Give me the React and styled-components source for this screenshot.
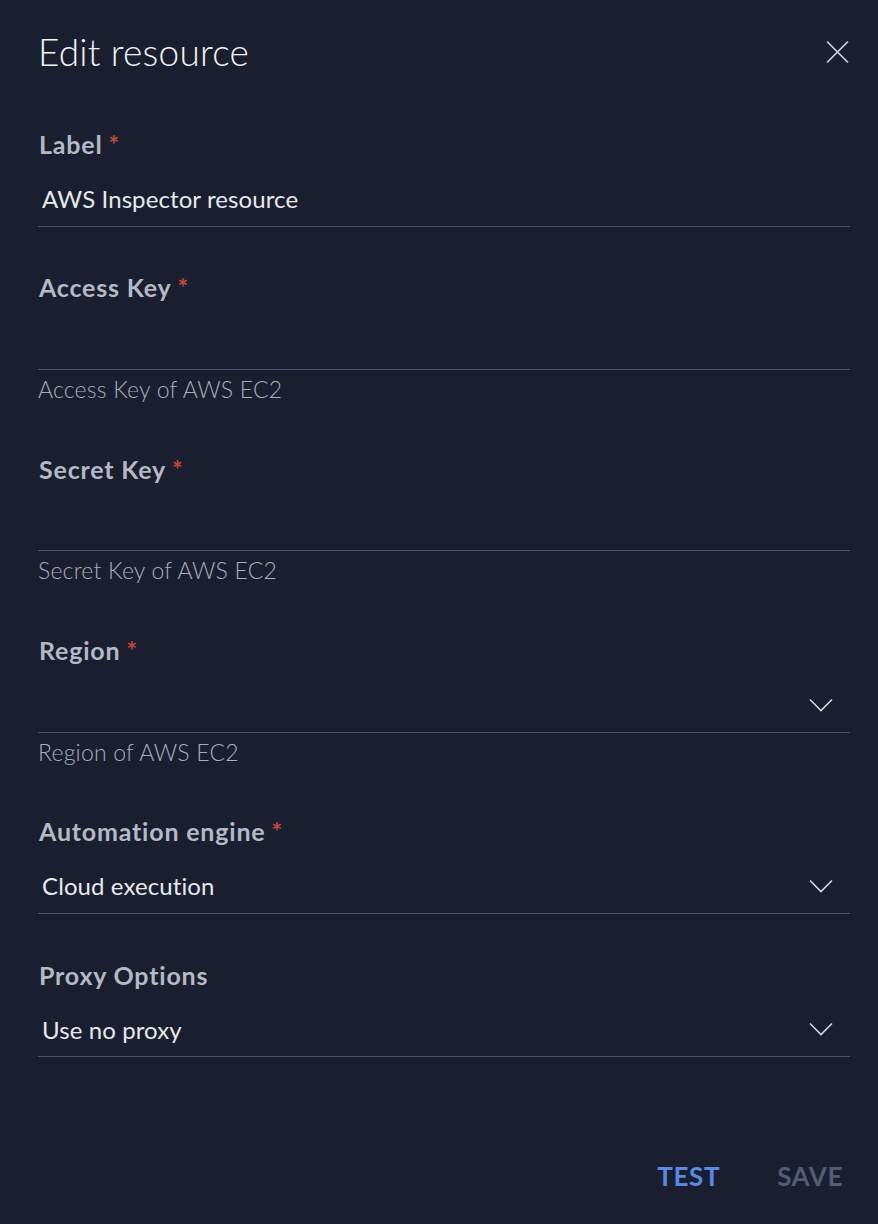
import { createGlobalStyle } from 'styled-components'
import styled from 'styled-components'

const GlobalStyle = createGlobalStyle`
	html, body {
		margin: 0;
		padding: 0;
		background: #1a1f30;
	}
	body {
		font-family: Lato, "Noto Sans", sans-serif;
		color: #e8eaee;
	}
`

const Panel = styled.div`
	width: 878px;
	height: 1224px;
	box-sizing: border-box;
	padding: 24px 28px 0 38px;
	display: flex;
	flex-direction: column;
	background: #1a1f30;
`

const Header = styled.div`
	display: flex;
	justify-content: space-between;
	align-items: center;
	margin-bottom: 49px;
`

const Title = styled.h1`
	margin: 0;
	font-size: 37px;
	font-weight: 300;
	letter-spacing: 0.2px;
	line-height: 56px;
	color: #f2f3f5;
`

const CloseButton = styled.button`
	background: none;
	border: none;
	padding: 0;
	width: 24px;
	height: 24px;
	display: flex;
	align-items: center;
	justify-content: center;
	cursor: pointer;
`

const Form = styled.div`
	display: flex;
	flex-direction: column;
`

const Field = styled.div`
	display: flex;
	flex-direction: column;
	margin-bottom: ${props => (props.$helper ? '50.5px' : '45.8px')};
`

const Label = styled.label`
	font-size: 25px;
	font-weight: 700;
	letter-spacing: 0.8px;
	line-height: 30px;
	color: #b4b9c3;
	padding-left: 1px;
`

const Required = styled.span`
	color: #c8473b;
	margin-left: 6px;
`

const InputRow = styled.div`
	margin-top: 18px;
	height: 49.7px;
	box-sizing: border-box;
	display: flex;
	align-items: center;
	justify-content: space-between;
	border-bottom: 1px solid #4b546d;
	padding: 0 17px 4px 4px;
`

const Value = styled.span`
	font-size: 24px;
	font-weight: 400;
	letter-spacing: 0.1px;
	color: #e6e8ec;
	line-height: 40px;
`

const ChevronWrap = styled.span`
	display: flex;
	margin-bottom: 1px;
`

const Helper = styled.div`
	margin-top: 5px;
	font-size: 23px;
	font-weight: 300;
	letter-spacing: 0.2px;
	line-height: 28px;
	color: #a8adb7;
`

const Footer = styled.div`
	margin-top: auto;
	display: flex;
	justify-content: flex-end;
	gap: 57px;
	padding: 0 35px 30px 0;
	margin-right: -28px;
`

const ActionButton = styled.button`
	background: none;
	border: none;
	padding: 0;
	font-family: inherit;
	font-size: 26px;
	font-weight: 700;
	letter-spacing: 0.6px;
	line-height: 36px;
	color: ${props => (props.$disabled ? '#525c73' : '#5b88e2')};
	cursor: ${props => (props.$disabled ? 'default' : 'pointer')};
`

function CloseIcon() {
	return (
		<svg width="24" height="24" viewBox="0 0 24 24">
			<path d="M1 1.5 L22 22.5 M22 1.5 L1 22.5" stroke="#d4d7de" strokeWidth="1.6" fill="none" />
		</svg>
	)
}

function Chevron() {
	return (
		<ChevronWrap>
			<svg width="24" height="14" viewBox="0 0 24 14">
				<path d="M1 1.5 L12 12.5 L23 1.5" stroke="#d4d7de" strokeWidth="1.6" fill="none" />
			</svg>
		</ChevronWrap>
	)
}

const fields = [
	{ label: 'Label', required: true, value: 'AWS Inspector resource' },
	{ label: 'Access Key', required: true, helper: 'Access Key of AWS EC2' },
	{ label: 'Secret Key', required: true, helper: 'Secret Key of AWS EC2' },
	{ label: 'Region', required: true, helper: 'Region of AWS EC2', select: true },
	{ label: 'Automation engine', required: true, value: 'Cloud execution', select: true },
	{ label: 'Proxy Options', value: 'Use no proxy', select: true },
]

export default function App() {
	return (
		<>
			<GlobalStyle />
			<Panel>
				<Header>
					<Title>Edit resource</Title>
					<CloseButton aria-label="Close">
						<CloseIcon />
					</CloseButton>
				</Header>
				<Form>
					{fields.map(f => (
						<Field key={f.label} $helper={!!f.helper}>
							<Label>
								{f.label}
								{f.required && <Required>*</Required>}
							</Label>
							<InputRow>
								<Value>{f.value || ''}</Value>
								{f.select && <Chevron />}
							</InputRow>
							{f.helper && <Helper>{f.helper}</Helper>}
						</Field>
					))}
				</Form>
				<Footer>
					<ActionButton>TEST</ActionButton>
					<ActionButton $disabled>SAVE</ActionButton>
				</Footer>
			</Panel>
		</>
	)
}
